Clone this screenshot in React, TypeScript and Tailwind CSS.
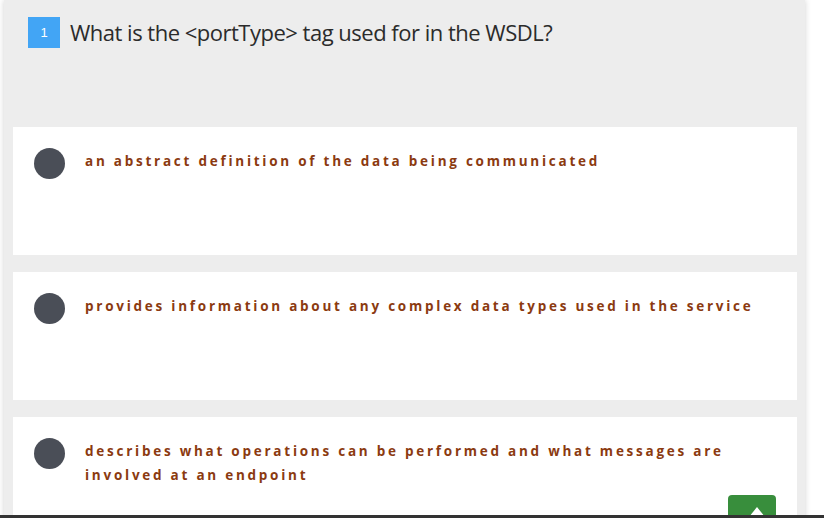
const options = [
  'an abstract definition of the data being communicated',
  'provides information about any complex data types used in the service',
  'describes what operations can be performed and what messages are involved at an endpoint',
];

export default function App() {
  return (
    <div className="relative h-[518px] w-full overflow-hidden bg-white">
      {/* Question panel */}
      <div className="ml-[4px] w-[801px] bg-[#ededed] pl-[9px] pr-[8px] shadow-[0_0_6px_rgba(0,0,0,0.18)]">
        <div className="flex h-[127px] items-start gap-[10px] pl-[15px] pt-[17px]">
          <span className="flex h-[31px] w-[32px] items-center justify-center bg-[#42a5f5] font-['Liberation_Sans',sans-serif] text-[13px] text-white">
            1
          </span>
          <h1 className="font-['Open_Sans',sans-serif] text-[22px] leading-[31px] tracking-[-0.5px] text-[#2b2b2b]">
            What is the &lt;portType&gt; tag used for in the WSDL?
          </h1>
        </div>

        <div className="flex flex-col gap-[17px]">
          {options.map((text) => (
            <div key={text} className="flex h-[128px] items-start gap-[20px] bg-white px-[21px] pt-[21px]">
              <span className="h-[31px] w-[31px] shrink-0 rounded-full bg-[#4a4e57]" />
              <p className="max-w-[700px] pt-[1px] font-['Open_Sans',sans-serif] text-[13.5px] font-bold leading-[24px] tracking-[2.75px] text-[#8b3a10]">
                {text}
              </p>
            </div>
          ))}
        </div>
      </div>

      {/* Scroll to top */}
      <button className="absolute left-[728px] top-[495px] h-[40px] w-[48px] rounded-[4px] bg-[#388e3c]">
        <svg className="absolute left-[21px] top-[12px]" width="16" height="12" viewBox="0 0 16 12" fill="white">
          <path d="M8 0 L16 10 L0 10 Z" />
        </svg>
      </button>

      <div className="absolute bottom-0 left-0 h-[3px] w-full bg-[#333]" />
    </div>
  );
}
